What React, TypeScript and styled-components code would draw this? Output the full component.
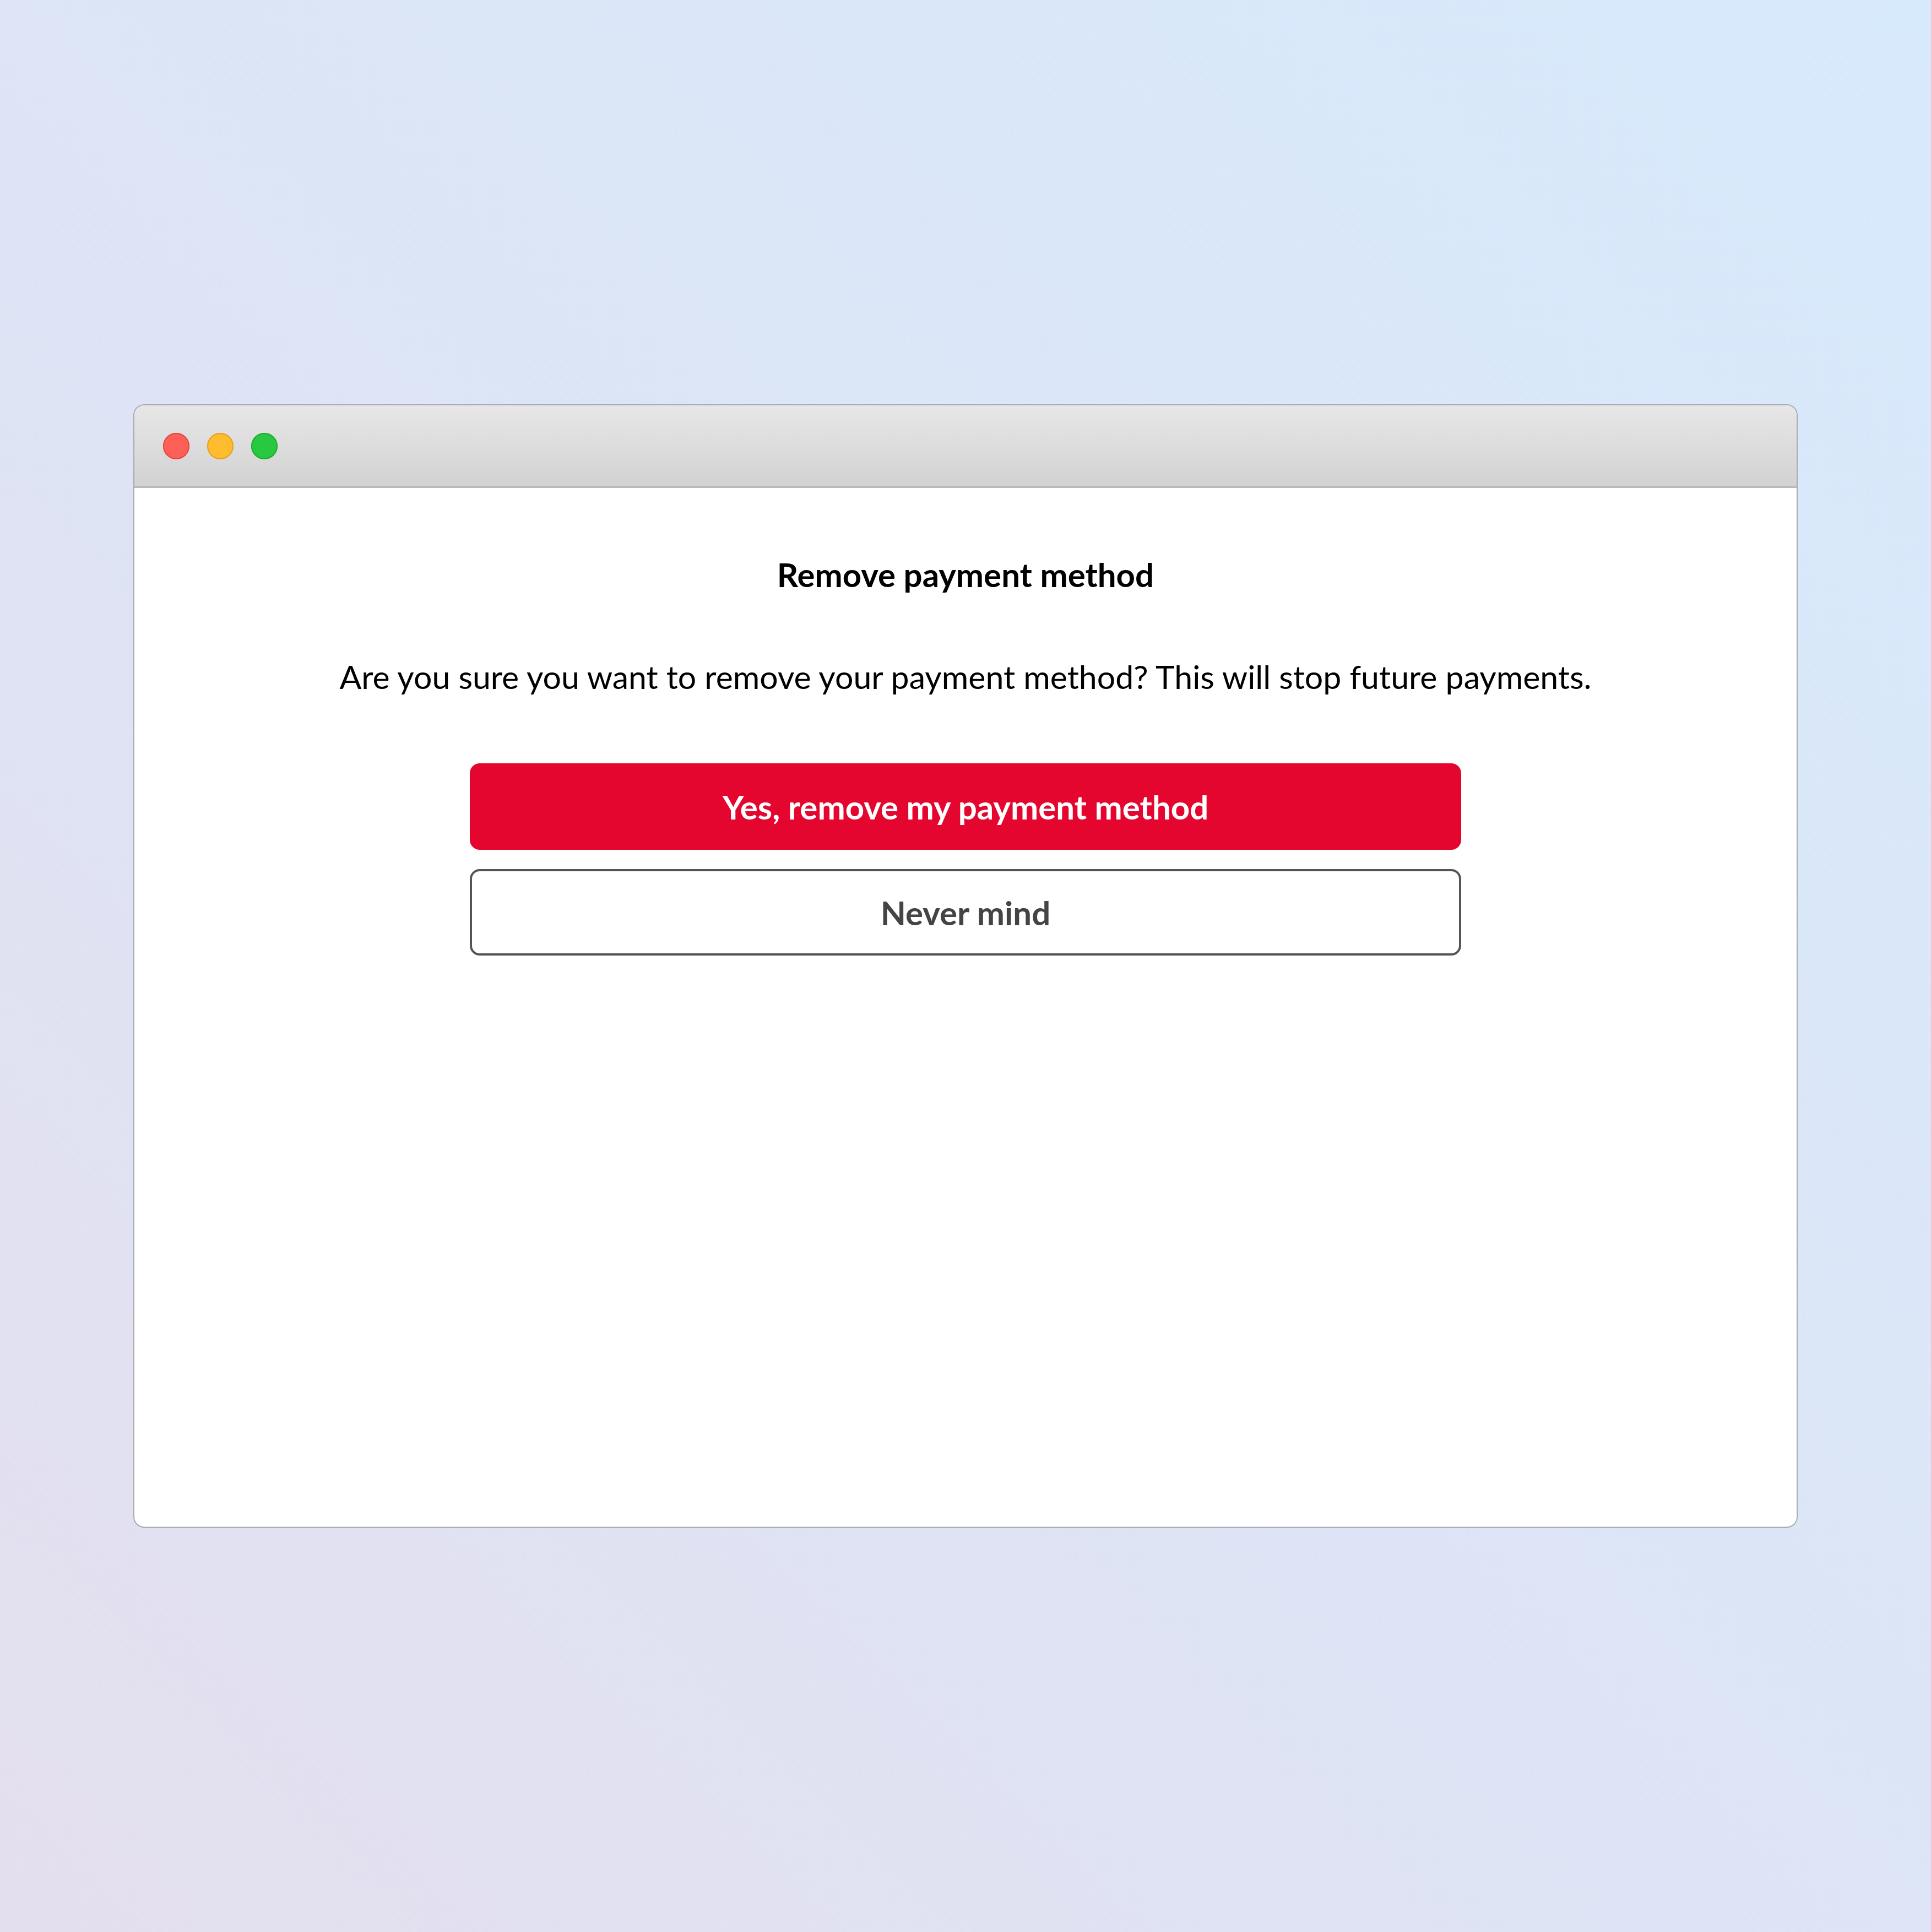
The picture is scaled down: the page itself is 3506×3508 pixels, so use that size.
import React from "react";
import styled, { createGlobalStyle } from "styled-components";

const GlobalStyle = createGlobalStyle`
  html, body {
    margin: 0;
    padding: 0;
  }
  body {
    font-family: Lato, "Noto Sans", "Liberation Sans", sans-serif;
    background: linear-gradient(to bottom left, #d7eafc 0%, #dde5f6 50%, #e4dfee 100%);
  }
`;

const Page = styled.div`
  width: 3506px;
  height: 3508px;
  display: flex;
  align-items: center;
  justify-content: center;
`;

const Window = styled.div`
  width: 3022px;
  height: 2040px;
  display: flex;
  flex-direction: column;
  background: #ffffff;
  border: 2px solid #a7abb3;
  border-radius: 20px;
  overflow: hidden;
  box-sizing: border-box;
`;

const TitleBar = styled.div`
  height: 150px;
  flex: 0 0 auto;
  display: flex;
  align-items: center;
  gap: 32px;
  padding-left: 52px;
  box-sizing: border-box;
  background: linear-gradient(180deg, #e7e7e7 0%, #d2d2d2 100%);
  border-bottom: 3px solid #b8b8b8;
`;

const Light = styled.span<{ $fill: string; $edge: string }>`
  width: 48px;
  height: 48px;
  border-radius: 50%;
  background: ${(p) => p.$fill};
  box-shadow: inset 0 0 0 2px ${(p) => p.$edge};
`;

const Content = styled.div`
  flex: 1;
  display: flex;
  flex-direction: column;
  align-items: center;
  padding-top: 121px;
`;

const Heading = styled.h1`
  margin: 0;
  font-size: 60px;
  line-height: 72px;
  font-weight: 700;
  color: #000000;
`;

const Message = styled.p`
  margin: 114px 0 0;
  font-size: 59px;
  line-height: 71px;
  font-weight: 400;
  color: #000000;
`;

const Actions = styled.div`
  margin-top: 122px;
  display: flex;
  flex-direction: column;
  gap: 35px;
  width: 1800px;
`;

const ActionButton = styled.button<{ $variant: "danger" | "outline" }>`
  height: 157px;
  width: 100%;
  border-radius: 18px;
  font-family: Lato, "Noto Sans", "Liberation Sans", sans-serif;
  font-size: 60px;
  font-weight: 700;
  cursor: pointer;
  box-sizing: border-box;
  background: ${(p) => (p.$variant === "danger" ? "#e5062f" : "#ffffff")};
  color: ${(p) => (p.$variant === "danger" ? "#ffffff" : "#444444")};
  border: ${(p) => (p.$variant === "danger" ? "none" : "4px solid #555555")};
`;

export default function App() {
  return (
    <>
      <GlobalStyle />
      <Page>
        <Window>
          <TitleBar>
            <Light $fill="#fe5f57" $edge="#e5463f" />
            <Light $fill="#febc2e" $edge="#e1a121" />
            <Light $fill="#28c840" $edge="#1dad2e" />
          </TitleBar>
          <Content>
            <Heading>Remove payment method</Heading>
            <Message>
              Are you sure you want to remove your payment method? This will stop future payments.
            </Message>
            <Actions>
              <ActionButton $variant="danger">Yes, remove my payment method</ActionButton>
              <ActionButton $variant="outline">Never mind</ActionButton>
            </Actions>
          </Content>
        </Window>
      </Page>
    </>
  );
}
